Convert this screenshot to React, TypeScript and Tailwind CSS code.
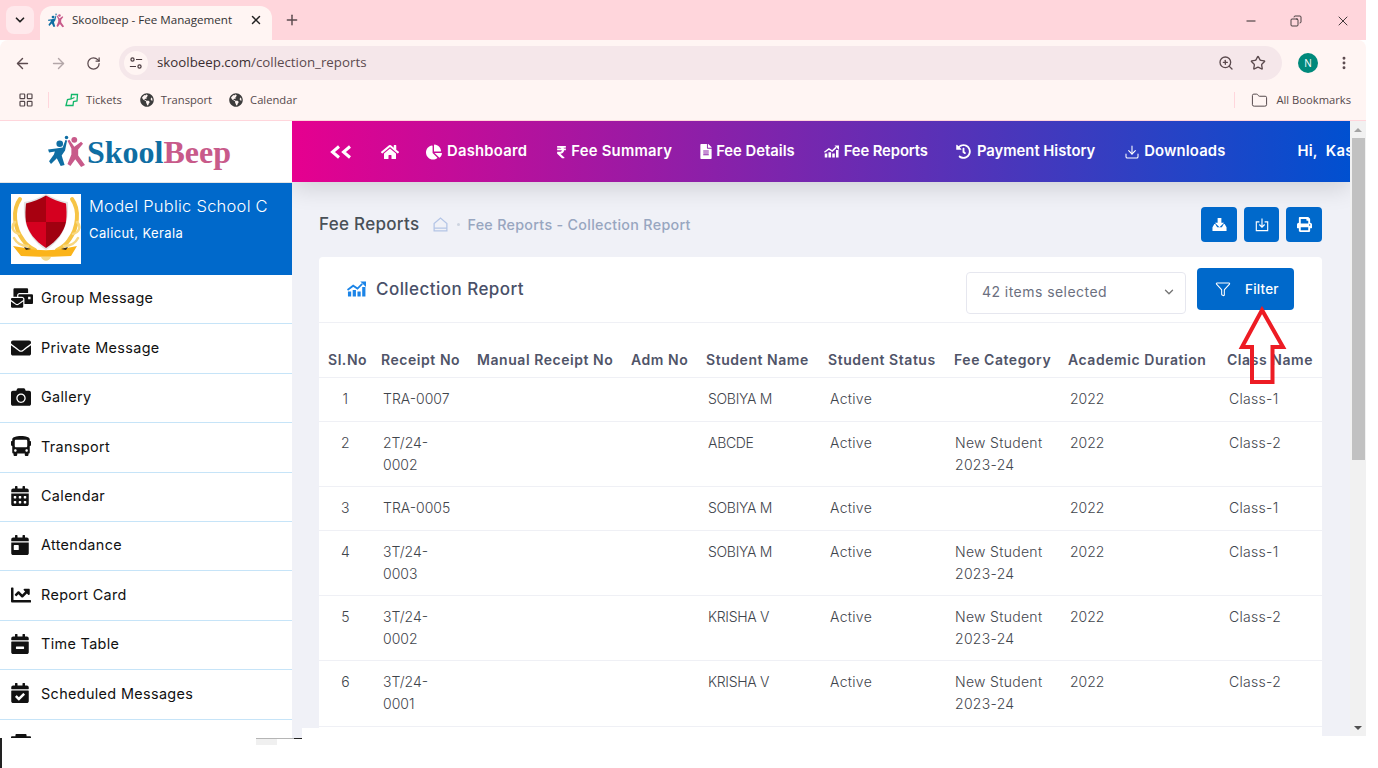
import {
  ArrowLeft,
  ArrowRight,
  ChevronDown,
  Copy,
  Download,
  EllipsisVertical,
  Filter,
  Folder,
  LayoutGrid,
  Minus,
  Plus,
  RotateCw,
  Star,
  X,
  ZoomIn,
} from "lucide-react";
import {
  FaBus,
  FaCalendarAlt,
  FaCalendarCheck,
  FaCalendarDay,
  FaCalendarMinus,
  FaCamera,
  FaChartLine,
  FaChartPie,
  FaEnvelope,
  FaFileAlt,
  FaGlobeAmericas,
  FaHistory,
  FaHome,
  FaMailBulk,
  FaPrint,
  FaRupeeSign,
  FaTrophy,
} from "react-icons/fa";

const sideItems = [
  { name: "Group Message", icon: <FaMailBulk className="w-[22px] h-[20px]" /> },
  { name: "Private Message", icon: <FaEnvelope className="w-[20px] h-[20px]" /> },
  { name: "Gallery", icon: <FaCamera className="w-[20px] h-[20px]" /> },
  { name: "Transport", icon: <FaBus className="w-[20px] h-[20px]" /> },
  { name: "Calendar", icon: <FaCalendarAlt className="w-[18px] h-[20px]" /> },
  { name: "Attendance", icon: <FaCalendarDay className="w-[18px] h-[20px]" /> },
  { name: "Report Card", icon: <FaChartLine className="w-[20px] h-[20px]" /> },
  { name: "Time Table", icon: <FaCalendarMinus className="w-[18px] h-[20px]" /> },
  { name: "Scheduled Messages", icon: <FaCalendarCheck className="w-[18px] h-[20px]" /> },
  { name: "", icon: <FaTrophy className="w-[20px] h-[20px]" /> },
];

const headers = [
  "Sl.No",
  "Receipt No",
  "Manual Receipt No",
  "Adm No",
  "Student Name",
  "Student Status",
  "Fee Category",
  "Academic Duration",
  "Class Name",
];

const rows = [
  { no: 1, receipt: "TRA-0007", name: "SOBIYA M", cat: "", cls: "Class-1", h: "h-[44px]" },
  { no: 2, receipt: "2T/24-0002", name: "ABCDE", cat: "New Student 2023-24", cls: "Class-2", h: "h-[65px]" },
  { no: 3, receipt: "TRA-0005", name: "SOBIYA M", cat: "", cls: "Class-1", h: "h-[44px]" },
  { no: 4, receipt: "3T/24-0003", name: "SOBIYA M", cat: "New Student 2023-24", cls: "Class-1", h: "h-[65px]" },
  { no: 5, receipt: "3T/24-0002", name: "KRISHA V", cat: "New Student 2023-24", cls: "Class-2", h: "h-[65px]" },
  { no: 6, receipt: "3T/24-0001", name: "KRISHA V", cat: "New Student 2023-24", cls: "Class-2", h: "h-[66px]" },
];

function People({ className }: { className: string }) {
  return (
    <svg viewBox="0 0 40 34" className={className}>
      <circle cx="12" cy="9" r="3.4" fill="#0f6ea3" />
      <circle cx="19" cy="2.5" r="1.8" fill="#0f6ea3" />
      <path d="M0 15 L8 14 L15 13 L18 5 L19.5 6 L17.5 16 L14 21 L17 31 L13 32 L9 24 L3 30 L1 27 L6 20 L7 17 L1 18 Z" fill="#0f6ea3" />
      <circle cx="27" cy="5" r="3" fill="#c85a8a" />
      <path d="M20 6 L22 5 L27 12 L34 7 L36 9 L31 15 L31 21 L38 31 L34 33 L28 25 L23 32 L20 30 L24 20 L24 14 Z" fill="#c85a8a" />
    </svg>
  );
}

function Crest() {
  return (
    <svg viewBox="0 0 70 70" className="w-[70px] h-[70px] bg-white shrink-0">
      <g fill="none" stroke="#f6c445" strokeLinecap="round">
        <path d="M9 5 C1 16 3 34 12 46 C16 52 20 54 24 56" strokeWidth="4" />
        <path d="M61 5 C69 16 67 34 58 46 C54 52 50 54 46 56" strokeWidth="4" />
        <path d="M4 28 C0 32 1 38 8 40 M3 44 C6 50 12 52 17 52" strokeWidth="2.5" stroke="#f8d77e" />
        <path d="M66 28 C70 32 69 38 62 40 M67 44 C64 50 58 52 53 52" strokeWidth="2.5" stroke="#f8d77e" />
      </g>
      <path d="M35 0 C28 4 20 7 13 8 C12 26 16 44 35 56 C54 44 58 26 57 8 C50 7 42 4 35 0 Z" fill="#e3e3e3" />
      <path d="M35 1.5 L35 28 L15 28 C14 21 14.5 15 15 9.5 C22 8 29 5 35 1.5 Z" fill="#a80010" />
      <path d="M35 1.5 C41 5 48 8 55 9.5 C55.5 15 56 21 55 28 L35 28 Z" fill="#d5001f" />
      <path d="M15 28 L35 28 L35 54 C24 47 17 38 15 28 Z" fill="#d5001f" />
      <path d="M35 28 L55 28 C53 38 46 47 35 54 Z" fill="#a00010" />
      <path d="M2 52 L14 54 C28 57 42 57 56 54 L66 52 L60 62 C44 63 26 63 10 62 Z" fill="#fbb41a" />
      <path d="M13 53 L20 55 L15 56 Z M57 53 L50 55 L55 56 Z" fill="#3a2a10" />
      <path d="M30 63 C32 68 38 68 40 63 Z" fill="#f3d98a" />
    </svg>
  );
}

function ChartBars({ className }: { className: string }) {
  return (
    <svg viewBox="0 0 20 16" fill="currentColor" className={className}>
      <path d="M1 10.5h3.4V16H1zM6 9h3.4v7H6zM11 10.5h3.4V16H11zM16 6h3.4v10H16z" />
      <path d="M0.5 9 L6.5 4.5 L11 7.5 L16 2.5" fill="none" stroke="currentColor" strokeWidth="1.9" />
      <path d="M14 0 H20 V6 Z" />
    </svg>
  );
}

export default function App() {
  return (
    <div className="relative w-[1378px] h-[768px] overflow-hidden bg-white [font-family:Inter,sans-serif]">
      <div className="w-[1366px] flex flex-col">
        {/* browser chrome */}
        <div className="h-[40px] bg-[#ffd6dc] flex items-end pl-[6px] text-[#4a3b3f] [font-family:'Open_Sans',sans-serif]">
          <div className="w-[28px] h-[28px] mb-[6px] rounded-lg bg-[#ffe9ec] flex items-center justify-center">
            <ChevronDown className="w-[14px] h-[14px] text-[#222]" strokeWidth={3} />
          </div>
          <div className="ml-[6px] w-[232px] h-[34px] rounded-t-xl bg-[#fff5f3] flex items-center pl-[8px] pb-[6px]">
            <People className="w-[17px] h-[15px]" />
            <span className="ml-[7px] text-[11.6px] text-[#333]">Skoolbeep - Fee Management</span>
            <X className="ml-auto mr-[9px] w-[14px] h-[14px] text-[#222]" strokeWidth={2.5} />
          </div>
          <Plus className="ml-[12px] mb-[12px] w-[16px] h-[16px] text-[#5b4a4e]" strokeWidth={2.2} />
          <Minus className="ml-auto mb-[12px] w-[14px] h-[14px] text-[#111]" strokeWidth={1.5} />
          <Copy className="ml-[32px] mb-[13px] w-[12px] h-[12px] text-[#111] -scale-x-100" strokeWidth={1.5} />
          <X className="ml-[33px] mb-[11px] mr-[15px] w-[16px] h-[16px] text-[#111]" strokeWidth={1.2} />
        </div>
        <div className="h-[40px] bg-[#fff5f3] rounded-tl-lg rounded-tr-lg flex items-center pt-[6px] pl-[14px] text-[#5b4a4e] [font-family:'Open_Sans',sans-serif]">
          <ArrowLeft className="w-[17px] h-[17px]" strokeWidth={2} />
          <ArrowRight className="ml-[19px] w-[17px] h-[17px] text-[#b3a6a8]" strokeWidth={2} />
          <RotateCw className="ml-[19px] w-[15px] h-[15px]" strokeWidth={2} />
          <div className="ml-[18px] w-[1163px] h-[34px] rounded-full bg-[#f5e7ea] flex items-center pl-[5px] pr-[16px]">
            <div className="w-[24px] h-[24px] rounded-full bg-[#fff5f3] flex items-center justify-center">
              <svg viewBox="0 0 16 16" className="w-[14px] h-[14px]" fill="none" stroke="#4a3b3f" strokeWidth="1.4">
                <circle cx="4" cy="4" r="1.8" />
                <path d="M8 4h7M1 12h7" />
                <circle cx="12" cy="12" r="1.8" />
              </svg>
            </div>
            <span className="ml-[9px] text-[13.3px] text-[#3a2e31]">
              skoolbeep.com<span className="text-[#5b4a4e]">/collection_reports</span>
            </span>
            <ZoomIn className="ml-auto w-[16px] h-[16px]" strokeWidth={2} />
            <Star className="ml-[16px] w-[16px] h-[16px]" strokeWidth={2} />
          </div>
          <div className="ml-[16px] w-[20px] h-[20px] rounded-full bg-[#00897b] flex items-center justify-center text-white text-[10px]">N</div>
          <EllipsisVertical className="ml-[18px] w-[16px] h-[16px]" strokeWidth={2.4} />
        </div>
        <div className="h-[41px] bg-[#fff5f3] border-b border-[#ffd6dc] flex items-center pl-[18px] text-[11.2px] text-[#55494c] [font-family:'Open_Sans',sans-serif]">
          <LayoutGrid className="w-[16px] h-[16px]" strokeWidth={1.8} />
          <div className="ml-[14px] w-[1px] h-[16px] bg-[#ffd6dc]" />
          <svg viewBox="0 0 14 14" className="ml-[16px] w-[14px] h-[14px]" fill="none" stroke="#12b76a" strokeWidth="1.3">
            <path d="M1 12.5 L2.5 6.5 L6 6 L6.5 1.5 L12.5 1.5 L12 8 L8.5 8.5 L8 12.5 Z M6 6 L9.5 4.5" />
          </svg>
          <span className="ml-[7px]">Tickets</span>
          <FaGlobeAmericas className="ml-[18px] w-[14px] h-[14px] text-[#3c3c3c]" />
          <span className="ml-[7px]">Transport</span>
          <FaGlobeAmericas className="ml-[17px] w-[14px] h-[14px] text-[#3c3c3c]" />
          <span className="ml-[7px]">Calendar</span>
          <div className="ml-auto w-[1px] h-[16px] bg-[#ffd6dc]" />
          <Folder className="ml-[16px] w-[17px] h-[17px]" strokeWidth={1.4} />
          <span className="ml-[8px] mr-[15px]">All Bookmarks</span>
        </div>

        {/* page */}
        <div className="flex h-[615px]">
          <aside className="w-[292px] shrink-0 overflow-hidden bg-white h-[617px]">
            <div className="h-[62px] flex items-center pl-[48px] border-b border-[#e5e5e5]">
              <People className="w-[39px] h-[33px]" />
              <span className="mt-[1px] text-[32px] font-bold leading-none [font-family:'Liberation_Serif',serif]">
                <span className="text-[#0f6ea3]">Skool</span>
                <span className="text-[#c85a8a]">Beep</span>
              </span>
            </div>
            <div className="h-[92px] bg-[#0069cb] flex items-center pl-[11px] text-white">
              <Crest />
              <div className="ml-[8px] pb-[20px]">
                <div className="text-[16.5px] font-light tracking-[0.25px]">Model Public School C</div>
                <div className="mt-[5px] text-[13px] tracking-[0.4px]">Calicut, Kerala</div>
              </div>
            </div>
            {sideItems.map((item, idx) => (
              <div key={idx} className="h-[49.4px] pb-[2px] border-b border-[#c6e4f8] flex items-center text-[#111] text-[14.4px] tracking-[0.35px]">
                <span className="w-[41px] pl-[11px] flex items-center">{item.icon}</span>
                {item.name}
              </div>
            ))}
          </aside>

          <main className="w-[1058px] shrink-0 flex flex-col overflow-hidden bg-[#f0f1f7]">
            <nav className="relative h-[61px] shrink-0 bg-[linear-gradient(90deg,#e6008f,#0050d0)] shadow-[0_6px_24px_rgba(0,0,0,0.14)] flex items-center pl-[38px] text-white text-[14.8px] tracking-[0.25px] font-semibold whitespace-nowrap overflow-hidden *:shrink-0">
              <svg viewBox="0 0 22 14" className="w-[22px] h-[14px]" fill="none" stroke="currentColor" strokeWidth="3">
                <path d="M9 1.5 L2.5 7 L9 12.5 M20 1.5 L13.5 7 L20 12.5" />
              </svg>
              <FaHome className="ml-[29px] w-[18px] h-[16px]" />
              <FaChartPie className="ml-[27px] w-[16px] h-[16px]" />
              <span className="ml-[5px]">Dashboard</span>
              <FaRupeeSign className="ml-[29px] w-[11px] h-[14px]" />
              <span className="ml-[4px]">Fee Summary</span>
              <FaFileAlt className="ml-[28px] w-[12px] h-[15px]" />
              <span className="ml-[4px] tracking-[0px]">Fee Details</span>
              <ChartBars className="ml-[29px] w-[15px] h-[13px]" />
              <span className="ml-[5px] tracking-[-0.1px]">Fee Reports</span>
              <FaHistory className="ml-[28px] w-[15px] h-[15px]" />
              <span className="ml-[6px] tracking-[0px]">Payment History</span>
              <Download className="ml-[29px] w-[16px] h-[16px]" strokeWidth={1.6} />
              <span className="ml-[4px] tracking-[0.15px]">Downloads</span>
              <span className="ml-[72px]">Hi,&nbsp; Kasturi</span>
            </nav>

            <div className="flex-1 flex flex-col pl-[27px] pr-[28px] min-h-0">
              <div className="h-[75px] shrink-0 flex items-center pt-[10px]">
                <span className="text-[17px] font-medium text-[#495057] tracking-[0.3px]">Fee Reports</span>
                <svg viewBox="0 0 16 16" className="ml-[13px] w-[17px] h-[17px]" fill="none" stroke="#b4c5e6" strokeWidth="1.2">
                  <path d="M2 7 L8 2 L14 7 V14 H2 Z M2 11.5 H14" />
                </svg>
                <span className="ml-[8px] w-[3px] h-[3px] rounded-full bg-[#cdd4e0]" />
                <span className="ml-[7px] text-[14.3px] font-medium text-[#98a6c0] tracking-[0.3px]">Fee Reports - Collection Report</span>
                <div className="ml-auto flex gap-[7px] text-white">
                  <button className="w-[36px] h-[35px] rounded bg-[#0069cb] flex items-center justify-center">
                    <svg viewBox="0 0 16 16" className="w-[15px] h-[15px]" fill="currentColor">
                      <path d="M6 1h4v5h3L8 11 3 6h3z" />
                      <path d="M2.5 7.5 L0.5 11v4h15v-4l-2-3.5h-1L10.5 11h-5L3.5 7.5z" />
                    </svg>
                  </button>
                  <button className="w-[35px] h-[35px] rounded bg-[#0069cb] flex items-center justify-center">
                    <svg viewBox="0 0 16 16" className="w-[14px] h-[15px]" fill="none" stroke="currentColor" strokeWidth="1.3">
                      <path d="M5 5 H1.5 V15 H14.5 V5 H11 M8 1 V11 M5 8 L8 11 L11 8" />
                    </svg>
                  </button>
                  <button className="w-[36px] h-[35px] rounded bg-[#0069cb] flex items-center justify-center">
                    <FaPrint className="w-[15px] h-[15px]" />
                  </button>
                </div>
              </div>

              <section className="flex-1 min-h-0 bg-white rounded-t overflow-hidden">
                <div className="h-[66px] border-b border-[#eff0f5] flex items-start">
                  <ChartBars className="ml-[28px] mt-[24px] w-[19px] h-[16px] text-[#1b84e7]" />
                  <span className="ml-[10px] mt-[20px] text-[17px] font-medium text-[#495068] tracking-[0.45px]">Collection Report</span>
                  <div className="ml-auto mt-[15px] w-[220px] h-[42px] rounded border border-[#e6e7ef] flex items-center pl-[15px] pr-[9px] pb-[3px] text-[14px] text-[#6b7080] tracking-[0.45px]">
                    42 items selected
                    <ChevronDown className="ml-auto w-[14px] h-[14px] text-[#777]" strokeWidth={2.4} />
                  </div>
                  <button className="ml-[11px] mr-[28px] mt-[11px] w-[97px] h-[42px] rounded bg-[#0069cb] flex items-center pl-[18px] text-white text-[13.5px] font-medium tracking-[0.2px]">
                    <Filter className="w-[16px] h-[16px]" strokeWidth={1.6} />
                    <span className="ml-[14px]">Filter</span>
                  </button>
                </div>
                <table className="w-[1003px] table-fixed border-collapse">
                  <colgroup>
                    <col className="w-[53px]" />
                    <col className="w-[96px]" />
                    <col className="w-[154px]" />
                    <col className="w-[75px]" />
                    <col className="w-[122px]" />
                    <col className="w-[126px]" />
                    <col className="w-[114px]" />
                    <col className="w-[159px]" />
                    <col className="w-[104px]" />
                  </colgroup>
                  <thead>
                    <tr className="h-[54px] border-b border-[#eff0f5]">
                      {headers.map((h) => (
                        <th key={h} className="pl-[9px] pt-[26px] align-top text-left text-[14px] leading-[22px] font-semibold text-[#505468] whitespace-nowrap tracking-[0.55px]">
                          {h}
                        </th>
                      ))}
                    </tr>
                  </thead>
                  <tbody className="text-[14px] leading-[22px] font-light text-[#3f454c] tracking-[0.3px]">
                    {rows.map((r) => (
                      <tr key={r.no} className={`${r.h} border-b border-[#eff0f5]`}>
                        <td className="pt-[10px] align-top text-center">{r.no}</td>
                        <td className="pt-[10px] pl-[11px] pr-[10px] align-top tracking-[0px]">{r.receipt}</td>
                        <td />
                        <td />
                        <td className="pt-[10px] pl-[11px] align-top tracking-[-0.3px]">{r.name}</td>
                        <td className="pt-[10px] pl-[11px] align-top">Active</td>
                        <td className="pt-[10px] pl-[10px] pr-[4px] align-top">{r.cat}</td>
                        <td className="pt-[10px] pl-[11px] align-top tracking-[0px]">2022</td>
                        <td className="pt-[10px] pl-[11px] align-top">{r.cls}</td>
                      </tr>
                    ))}
                  </tbody>
                </table>
              </section>
            </div>
          </main>

          <div className="w-[16px] shrink-0 bg-[#f1f1f1] flex flex-col items-center">
            <div className="h-[17px] flex items-center justify-center">
              <div className="w-0 h-0 border-x-[4px] border-x-transparent border-b-[4px] border-b-[#a3a3a3]" />
            </div>
            <div className="w-[13px] h-[322px] bg-[#c1c1c1]" />
            <div className="mt-auto h-[17px] flex items-center justify-center">
              <div className="w-0 h-0 border-x-[4px] border-x-transparent border-t-[4px] border-t-[#505050]" />
            </div>
          </div>
        </div>
      </div>

      {/* arrow pasted over the screenshot */}
      <svg className="absolute left-[1236px] top-[306px] w-[52px] h-[80px]" viewBox="0 0 52 80" fill="none">
        <path d="M26 4 L47 41 H36.5 V76 H16 V41 H6 Z" stroke="#ed1c24" strokeWidth="4" />
      </svg>

      {/* leftovers along the bottom edge of the capture */}
      <div className="absolute left-[302px] top-[728px] w-[17px] h-[8px] bg-white" />
      <div className="absolute left-[292px] top-[736px] w-[10px] h-[2px] bg-[#f0f1f7]" />
      <div className="absolute left-0 top-[738px] w-[2px] h-[30px] bg-[#222]" />
      <div className="absolute left-[256px] top-[738px] w-[38px] h-[1px] bg-[#b5b5b5]" />
      <div className="absolute left-[294px] top-[738px] w-[8px] h-[1px] bg-[#222]" />
      <div className="absolute left-[256px] top-[739px] w-[21px] h-[6px] bg-[#f0f0f0]" />
      <div className="absolute left-[2px] top-[738px] w-[254px] h-[30px] bg-white" />
    </div>
  );
}
